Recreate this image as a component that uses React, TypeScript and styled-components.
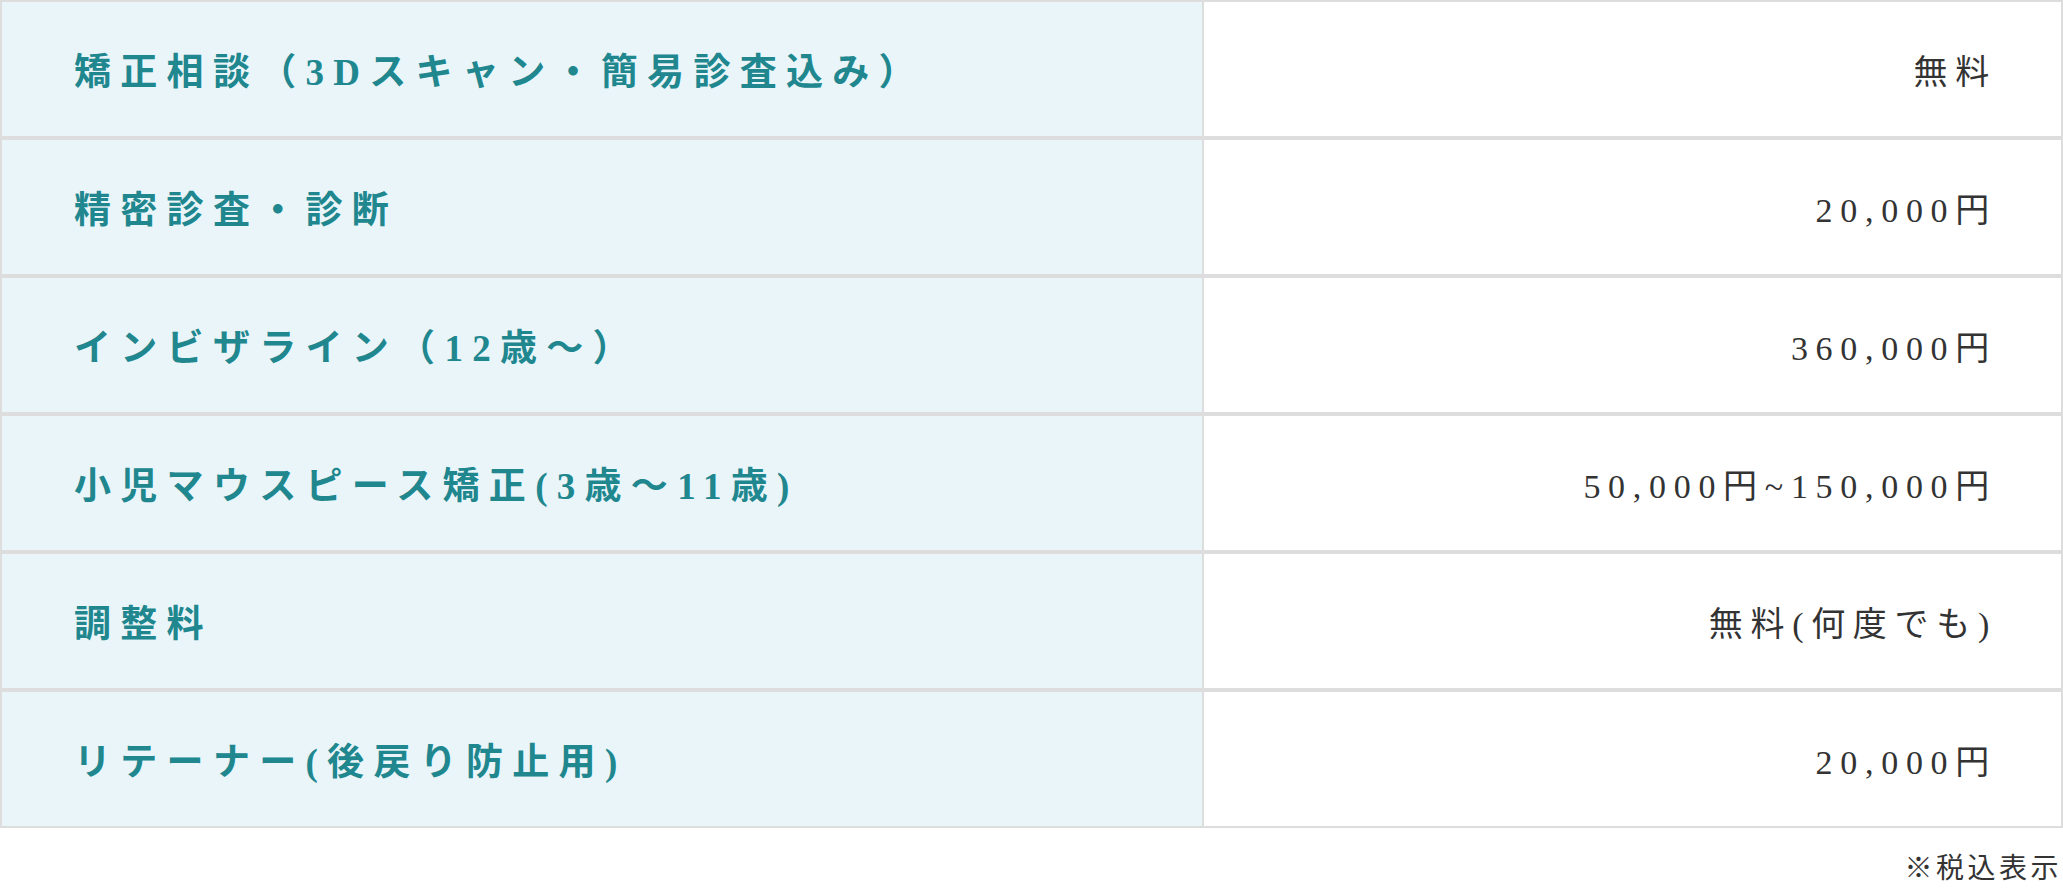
import React from 'react';
import styled, { createGlobalStyle } from 'styled-components';

const GlobalStyle = createGlobalStyle`
  html, body {
    margin: 0;
    padding: 0;
    background-color: #ffffff;
  }
  * {
    box-sizing: border-box;
  }
`;

// 料金表のデータ
const prices = [
  { name: '矯正相談（3Dスキャン・簡易診査込み）', price: '無料' },
  { name: '精密診査・診断', price: '20,000円' },
  { name: 'インビザライン（12歳〜）', price: '360,000円' },
  { name: '小児マウスピース矯正(3歳〜11歳)', price: '50,000円~150,000円' },
  { name: '調整料', price: '無料(何度でも)' },
  { name: 'リテーナー(後戻り防止用)', price: '20,000円' },
];

const App = () => {
  return (
    <>
      <GlobalStyle />
      <PriceSection>
        <PriceTable>
          {prices.map((item) => (
            <PriceRow key={item.name}>
              <NameCell>{item.name}</NameCell>
              <PriceCell>{item.price}</PriceCell>
            </PriceRow>
          ))}
        </PriceTable>
        <TaxNote>※税込表示</TaxNote>
      </PriceSection>
    </>
  );
};

export default App;

const PriceSection = styled.section`
  width: 2063px;
  display: flex;
  flex-direction: column;
`;

const PriceTable = styled.div`
  display: flex;
  flex-direction: column;
`;

const PriceRow = styled.div`
  display: flex;
  height: 138px;
  border: 2px solid #dddddd;
`;

const NameCell = styled.div`
  width: 1202px;
  flex-shrink: 0;
  display: flex;
  align-items: center;
  padding-left: 72px;
  background-color: #eaf5fa;
  border-right: 2px solid #dddddd;
  color: #20878f;
  font-family: 'Liberation Serif', 'Noto Sans CJK JP', serif;
  font-size: 37px;
  font-weight: 700;
  letter-spacing: 9.3px;
  white-space: nowrap;
`;

const PriceCell = styled.div`
  flex: 1;
  display: flex;
  align-items: center;
  justify-content: flex-end;
  padding-right: 64px;
  background-color: #ffffff;
  color: #333333;
  font-family: 'Liberation Serif', 'Noto Sans CJK JP', serif;
  font-size: 34px;
  font-weight: 400;
  letter-spacing: 7.7px;
  white-space: nowrap;
`;

const TaxNote = styled.p`
  margin: 20px 0 0;
  padding-right: 1px;
  text-align: right;
  color: #333333;
  font-family: 'Noto Sans CJK JP', sans-serif;
  font-size: 28px;
  line-height: 36px;
  letter-spacing: 3.5px;
`;
